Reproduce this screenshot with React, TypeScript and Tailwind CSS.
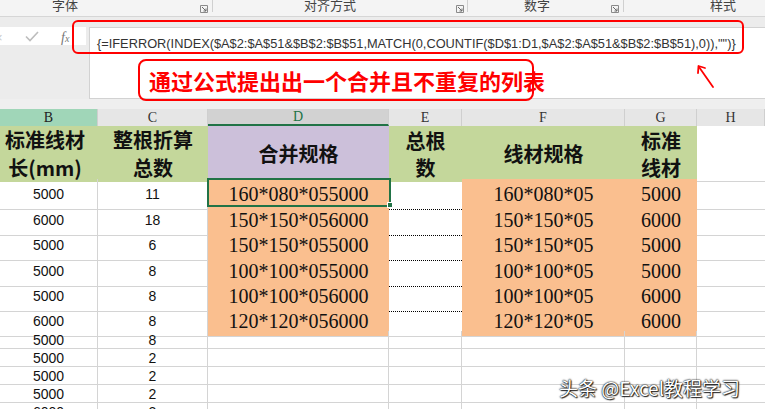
import React from "react";

const GRID = "grid grid-cols-[98px_110px_181px_73px_163px_72px_68px]";
const CJK = "font-['Noto_Sans_CJK_SC',sans-serif]";
const SERIF = "font-['Liberation_Serif','Noto_Sans_CJK_SC',serif]";
const SANS = "font-['Liberation_Sans',Arial,sans-serif]";

const Launcher = () => (
  <svg width="8" height="8" viewBox="0 0 8 8" className="shrink-0">
    <path d="M0.5 0.5H7.5V7.5H0.5Z" fill="none" stroke="#8a8a8a" strokeWidth="1" />
    <path d="M2 2L6 6M6 3.5V6H3.5" fill="none" stroke="#6a6a6a" strokeWidth="1" />
  </svg>
);

type Row = { b: string; c: string; d: string; f: string; g: string; h: number };

const mainRows: Row[] = [
  { b: "5000", c: "11", d: "160*080*055000", f: "160*080*05", g: "5000", h: 26 },
  { b: "6000", c: "18", d: "150*150*056000", f: "150*150*05", g: "6000", h: 25 },
  { b: "5000", c: "6", d: "150*150*055000", f: "150*150*05", g: "5000", h: 26 },
  { b: "5000", c: "8", d: "100*100*055000", f: "100*100*05", g: "5000", h: 25 },
  { b: "5000", c: "8", d: "100*100*056000", f: "100*100*05", g: "6000", h: 25 },
  { b: "6000", c: "8", d: "120*120*056000", f: "120*120*05", g: "6000", h: 25 },
];

const smallRows = [
  ["5000", "8"],
  ["5000", "2"],
  ["5000", "2"],
  ["5000", "2"],
  ["6000", "2"],
];

const colLetters = ["B", "C", "D", "E", "F", "G", "H"];

export default function App() {
  return (
    <div className="relative w-[765px] h-[409px] overflow-hidden bg-white">
      {/* Ribbon group labels */}
      <div className={`flex h-[17px] bg-[#f4f4f4] border-b border-[#d6d6d6] text-[13px] leading-[13px] text-[#444] ${CJK}`}>
        <div className="flex w-[213px] items-start border-r border-[#d0d0d0] h-[12px]">
          <span className="ml-[52px] -mt-[2px]">字体</span>
          <span className="ml-auto mr-[4px] mt-[5px]"><Launcher /></span>
        </div>
        <div className="flex w-[255px] items-start border-r border-[#d0d0d0] h-[12px]">
          <span className="ml-[91px] -mt-[2px]">对齐方式</span>
          <span className="ml-auto mr-[3px] mt-[5px]"><Launcher /></span>
        </div>
        <div className="flex w-[156px] items-start border-r border-[#d0d0d0] h-[12px]">
          <span className="ml-[56px] -mt-[2px]">数字</span>
          <span className="ml-auto mr-[4px] mt-[5px]"><Launcher /></span>
        </div>
        <div className="flex flex-1 items-start h-[12px]">
          <span className="ml-[86px] -mt-[2px]">样式</span>
        </div>
      </div>
      <div className="h-[10px] bg-[#ececec]" />

      {/* Formula bar */}
      <div className="flex h-[72px] bg-[#ececec]">
        <div className="w-[86px] flex flex-col">
          <div className="h-[18px] bg-white relative flex items-center">
            <span className={`absolute -left-[5px] top-[1px] text-[13px] text-[#c8c8c8] ${SANS}`}>×</span>
            <svg width="14" height="11" viewBox="0 0 14 11" className="absolute left-[25px] top-[4px]">
              <path d="M1 5.5L5 9.5L13 1" fill="none" stroke="#bdbdbd" strokeWidth="1.6" />
            </svg>
            <span className={`absolute left-[61px] top-[0px] italic text-[14px] text-[#777] ${SERIF}`}>f<span className="text-[10px]">x</span></span>
          </div>
        </div>
        <div className="ml-[3px] flex-1 bg-white border-l border-t border-b border-[#d2d2d2] pl-[7px] pt-[2px]">
          <span className={`text-[12.8px] leading-[18px] text-[#333] whitespace-nowrap ${SANS}`}>
            {'{=IFERROR(INDEX($A$2:$A$51&$B$2:$B$51,MATCH(0,COUNTIF($D$1:D1,$A$2:$A$51&$B$2:$B$51),0)),"")}'}
          </span>
        </div>
      </div>
      <div className="h-[10px] bg-[#efefef]" />

      {/* Column headers */}
      <div className={`${GRID} h-[17px] bg-[#e6e6e6] text-[14px] ${SERIF}`}>
        {colLetters.map((l) => {
          const base = "flex items-center justify-center border-r border-[#cfcfcf] leading-none";
          if (l === "B") return <div key={l} className={`${base} bg-[#a0d6b8] text-[#222]`}>{l}</div>;
          if (l === "D")
            return (
              <div key={l} className={`${base} bg-[#d2d2d2] text-[#217346] border-b-2 border-b-[#217346]`}>
                {l}
              </div>
            );
          return <div key={l} className={`${base} text-[#333]`}>{l}</div>;
        })}
      </div>

      {/* Header row */}
      <div className={`${GRID} h-[53px] text-[20px] leading-[28px] font-bold text-[#111] ${CJK}`}>
        <div className="bg-[#c4d79b] flex flex-col items-center justify-center pr-[8px]">
          <span>标准线材</span>
          <span>长(mm)</span>
        </div>
        <div className="bg-[#c4d79b] flex flex-col items-center justify-center">
          <span>整根折算</span>
          <span>总数</span>
        </div>
        <div className="bg-[#ccc0da] flex items-center justify-center">合并规格</div>
        <div className="bg-[#c4d79b] flex flex-col items-center justify-center leading-[27px]">
          <span>总根</span>
          <span>数</span>
        </div>
        <div className="bg-[#c4d79b] flex items-center justify-center">线材规格</div>
        <div className="bg-[#c4d79b] flex flex-col items-center justify-center leading-[27px]">
          <span>标准</span>
          <span>线材</span>
        </div>
        <div className="bg-white border-b border-[#d4d4d4]" />
      </div>

      {/* Main data rows */}
      {mainRows.map((r, i) => {
        const last = i === mainRows.length - 1;
        const orangeB = last ? "border-b border-[#d4d4d4]" : "border-b border-[#fabf8f]";
        return (
          <div key={i} className={GRID} style={{ height: r.h }}>
            <div className={`flex items-center justify-center border-r border-b border-[#d4d4d4] text-[14px] text-[#111] ${SANS}`}>{r.b}</div>
            <div className={`flex items-center justify-center border-r border-b border-[#d4d4d4] text-[14px] text-[#111] ${SANS}`}>{r.c}</div>
            <div className={`flex items-center justify-center bg-[#fabf8f] ${orangeB} text-[20px] text-[#111] ${SERIF}`}>{r.d}</div>
            <div className={last ? "border-b border-[#d4d4d4]" : "border-b border-dotted border-black"} />
            <div className={`flex items-center justify-center bg-[#fabf8f] ${orangeB} text-[20px] text-[#111] ${SERIF}`}>{r.f}</div>
            <div className={`flex items-center justify-center bg-[#fabf8f] ${orangeB} text-[20px] text-[#111] ${SERIF}`}>{r.g}</div>
            <div className="border-b border-[#d4d4d4]" />
          </div>
        );
      })}

      {/* Small rows */}
      {smallRows.map((r, i) => (
        <div key={i} className={`${GRID} h-[18px]`}>
          <div className={`flex items-center justify-center border-r border-b border-[#d4d4d4] text-[14px] leading-none text-[#111] ${SANS}`}>{r[0]}</div>
          <div className={`flex items-center justify-center border-r border-b border-[#d4d4d4] text-[14px] leading-none text-[#111] ${SANS}`}>{r[1]}</div>
          <div className="border-r border-b border-[#d4d4d4]" />
          <div className="border-r border-b border-[#d4d4d4]" />
          <div className="border-r border-b border-[#d4d4d4]" />
          <div className="border-r border-b border-[#d4d4d4]" />
          <div className="border-b border-[#d4d4d4]" />
        </div>
      ))}

      {/* Selected cell */}
      <div className="absolute left-[207px] top-[178px] w-[184px] h-[29px] border-2 border-[#217346]" />
      <div className="absolute left-[387px] top-[202px] w-[6px] h-[6px] bg-[#217346] border border-white" />

      {/* Red annotations */}
      <div className="absolute left-[72px] top-[20px] w-[672px] h-[34px] rounded-[6px] border-[2.5px] border-[#ff0000]" />
      <div className="absolute left-[138px] top-[59px] w-[396px] h-[42px] rounded-[8px] border-[2px] border-[#ff0000] flex items-center pl-[9px]">
        <span className={`text-[22px] leading-none font-bold text-[#ff0000] whitespace-nowrap ${CJK}`}>
          通过公式提出出一个合并且不重复的列表
        </span>
      </div>
      <svg className="absolute left-[690px] top-[60px]" width="30" height="32" viewBox="0 0 30 32">
        <path d="M23 27L9 7" stroke="#ff0000" strokeWidth="1.8" fill="none" strokeLinecap="round" />
        <path d="M8 13L8.5 6L15 8" stroke="#ff0000" strokeWidth="1.8" fill="none" strokeLinecap="round" strokeLinejoin="round" />
      </svg>

      {/* Watermark */}
      <div className={`absolute left-[559px] top-[376px] text-[19px] leading-[24px] text-white whitespace-nowrap [text-shadow:0_0_1px_#000,0_0_2px_#000,1px_1px_1px_#333] ${CJK}`}>
        头条 @Excel教程学习
      </div>
    </div>
  );
}
